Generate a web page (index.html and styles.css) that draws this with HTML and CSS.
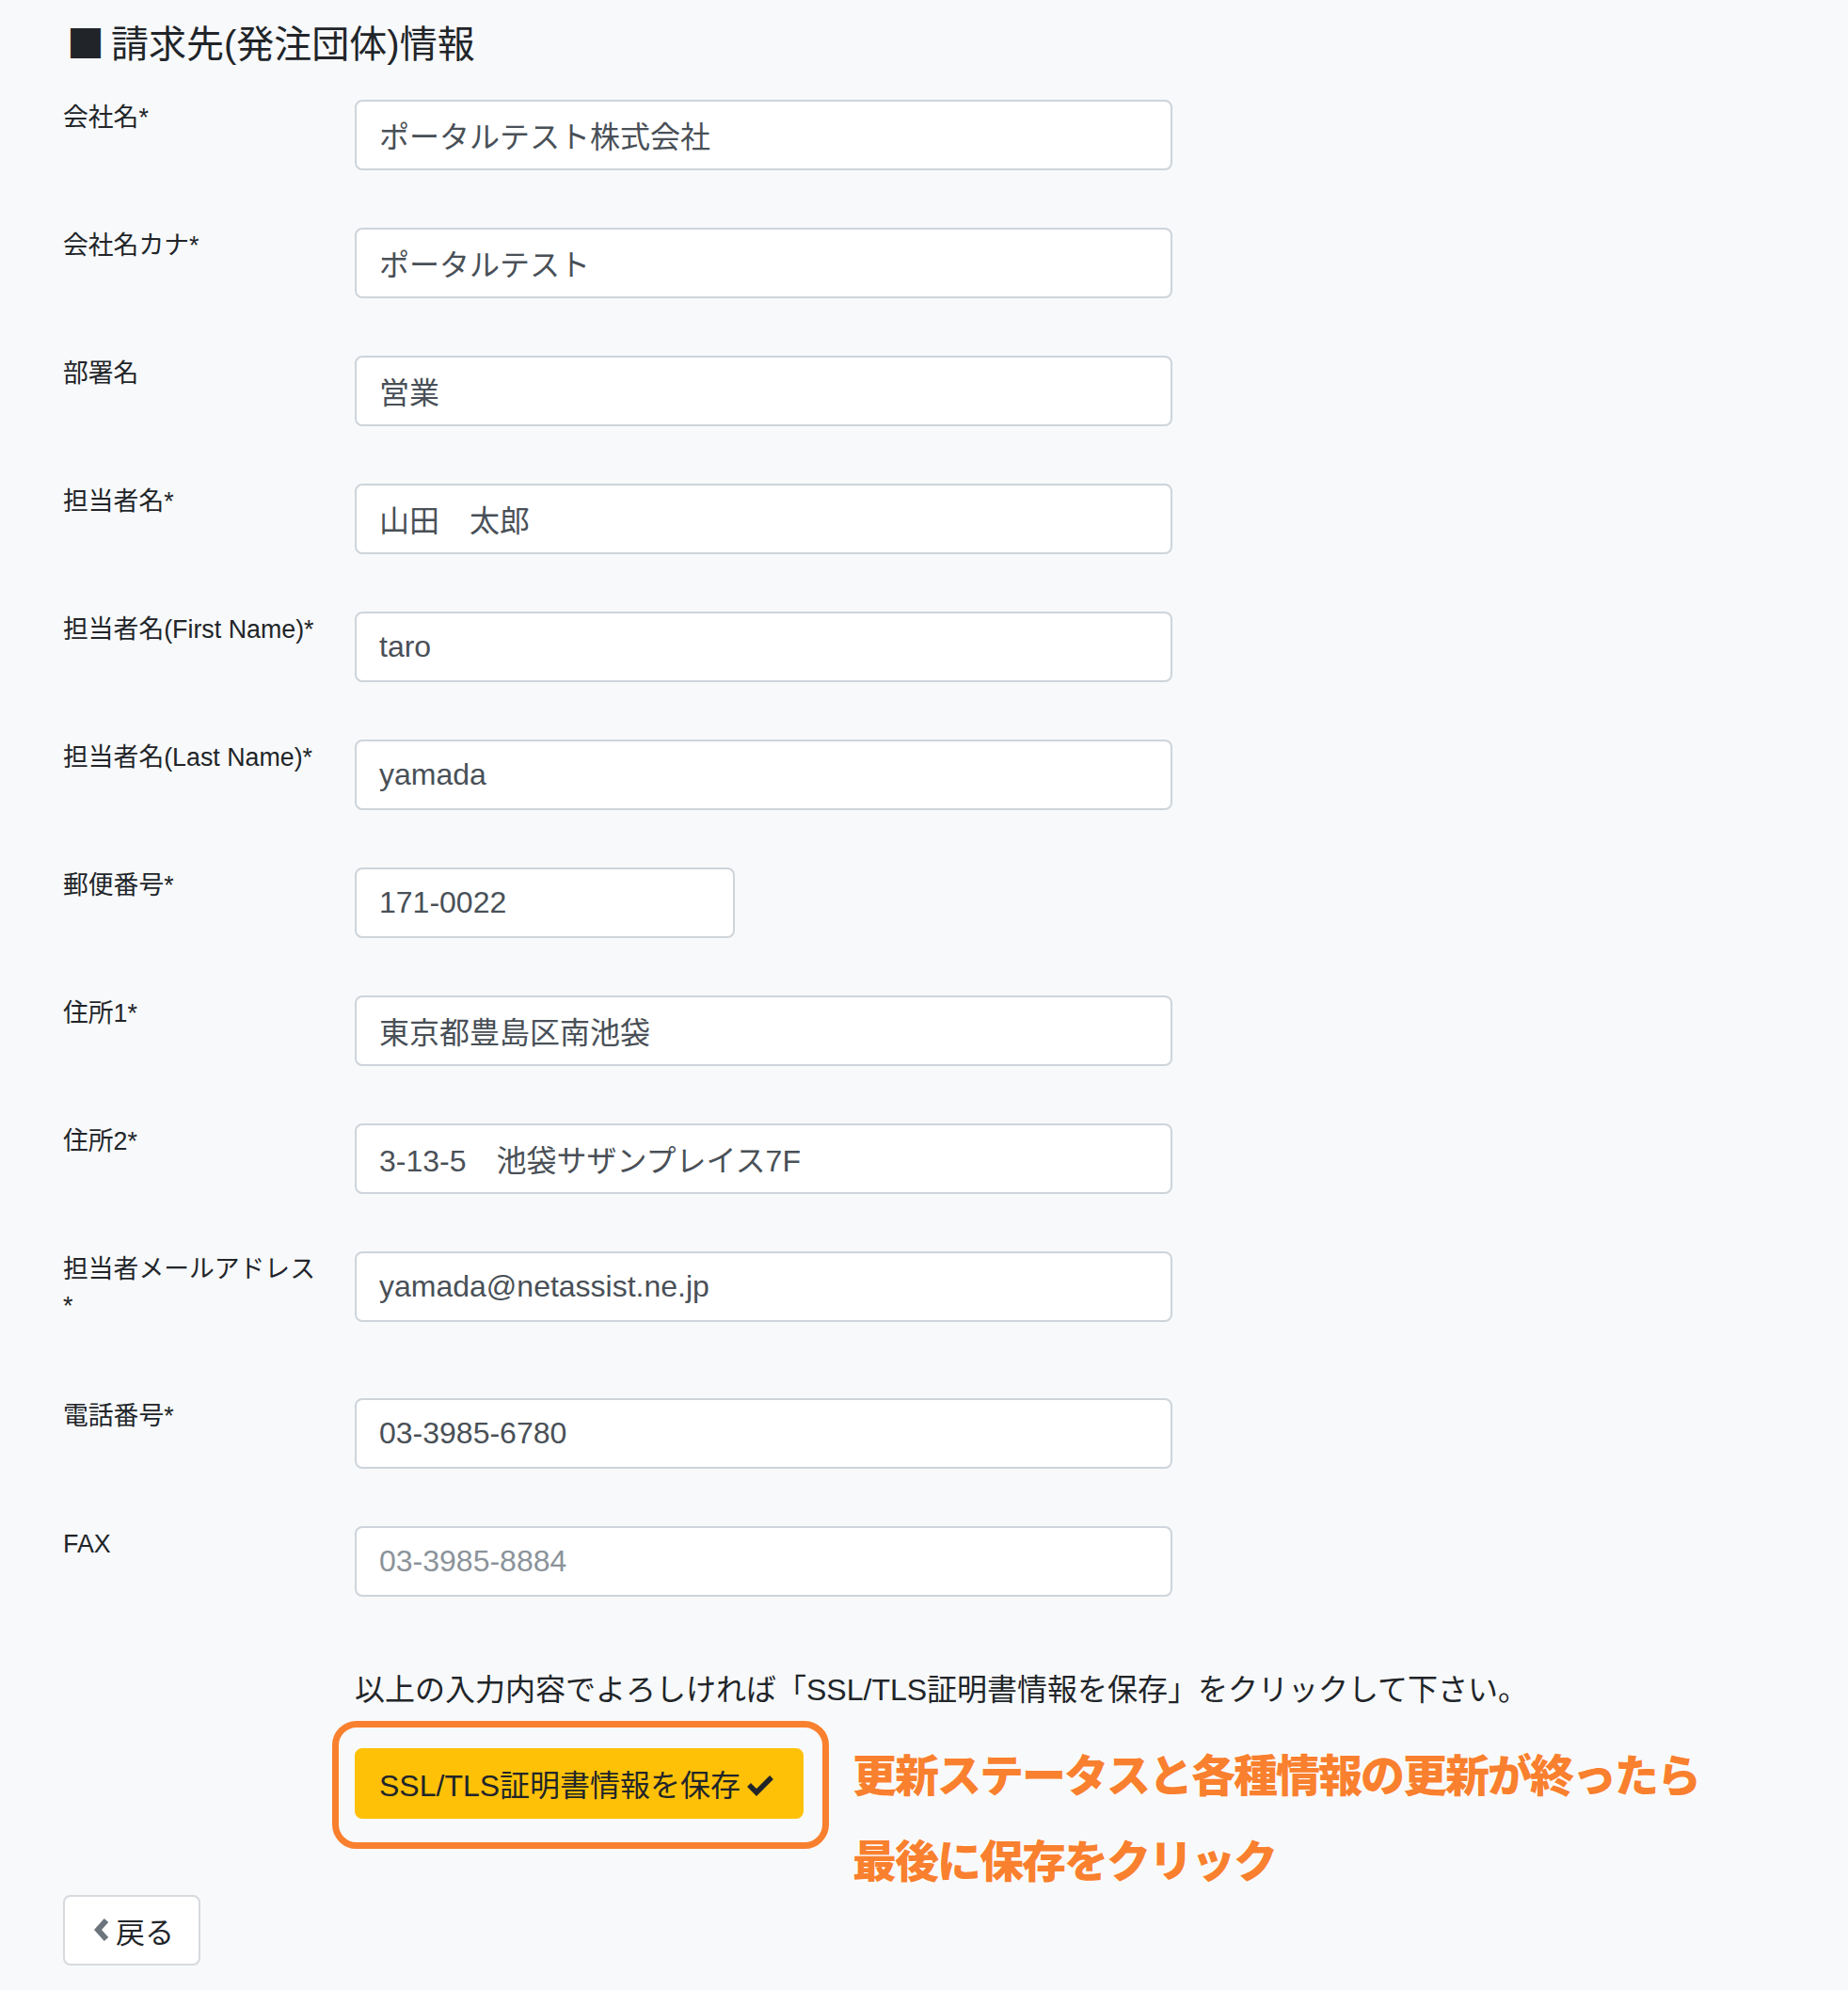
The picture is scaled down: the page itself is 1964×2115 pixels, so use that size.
FILE: index.html
```html
<!DOCTYPE html>
<html lang="ja">
<head>
    <meta charset="UTF-8">
    <meta name="viewport" content="width=device-width, initial-scale=1.0">
    <title>請求先情報</title>
    <link rel="stylesheet" href="styles.css">
</head>
<body>
    <div class="page">
        <h2 class="section-title"><span class="title-mark">■</span>請求先(発注団体)情報</h2>

        <form class="billing-form">
            <div class="form-row">
                <label class="form-label" for="company">会社名*</label>
                <input class="form-input" id="company" type="text" value="ポータルテスト株式会社">
            </div>
            <div class="form-row">
                <label class="form-label" for="companyKana">会社名カナ*</label>
                <input class="form-input" id="companyKana" type="text" value="ポータルテスト">
            </div>
            <div class="form-row">
                <label class="form-label" for="department">部署名</label>
                <input class="form-input" id="department" type="text" value="営業">
            </div>
            <div class="form-row">
                <label class="form-label" for="person">担当者名*</label>
                <input class="form-input" id="person" type="text" value="山田　太郎">
            </div>
            <div class="form-row">
                <label class="form-label" for="firstName">担当者名(First Name)*</label>
                <input class="form-input" id="firstName" type="text" value="taro">
            </div>
            <div class="form-row">
                <label class="form-label" for="lastName">担当者名(Last Name)*</label>
                <input class="form-input" id="lastName" type="text" value="yamada">
            </div>
            <div class="form-row">
                <label class="form-label" for="zip">郵便番号*</label>
                <input class="form-input input-short" id="zip" type="text" value="171-0022">
            </div>
            <div class="form-row">
                <label class="form-label" for="address1">住所1*</label>
                <input class="form-input" id="address1" type="text" value="東京都豊島区南池袋">
            </div>
            <div class="form-row">
                <label class="form-label" for="address2">住所2*</label>
                <input class="form-input" id="address2" type="text" value="3-13-5　池袋サザンプレイス7F">
            </div>
            <div class="form-row">
                <label class="form-label" for="email">担当者メールアドレス*</label>
                <input class="form-input" id="email" type="text" value="yamada@netassist.ne.jp">
            </div>
            <div class="form-row">
                <label class="form-label" for="tel">電話番号*</label>
                <input class="form-input" id="tel" type="text" value="03-3985-6780">
            </div>
            <div class="form-row">
                <label class="form-label" for="fax">FAX</label>
                <input class="form-input" id="fax" type="text" placeholder="03-3985-8884">
            </div>
        </form>

        <p class="confirm-note">以上の入力内容でよろしければ「SSL/TLS証明書情報を保存」をクリックして下さい。</p>

        <div class="save-area">
            <button class="btn-save" type="button">SSL/TLS証明書情報を保存<svg class="icon-check" viewBox="0 0 30 24"><polyline points="3,12 11,20 27,4"/></svg></button>
            <span class="callout-frame"></span>
            <p class="callout-text">更新ステータスと各種情報の更新が終ったら<br>最後に保存をクリック</p>
        </div>

        <div class="back-row">
            <button class="btn-back" type="button"><svg class="icon-chevron" viewBox="0 0 17 26"><polyline points="13,3 4,13 13,23"/></svg>戻る</button>
        </div>
    </div>
</body>
</html>
```

FILE: styles.css
```css
:root {
    --text-color: #212529;
    --input-text: #495057;
    --border-color: #ced4da;
    --bg-color: #f8f9fa;
    --accent: #ffc107;
    --callout: #f9802e;
}

body {
    margin: 0;
    background-color: var(--bg-color);
    color: var(--text-color);
    font-family: "Liberation Sans", "Noto Sans CJK JP", sans-serif;
}
.page {
    padding: 22.5px 0 27px 67px;
}
.section-title {
    margin: 0 0 35px;
    font-size: 40px;
    line-height: 48px;
    font-weight: 400;
}
.title-mark {
    font-family: "Noto Sans CJK JP", sans-serif;
    line-height: 0;
    margin-left: 4px;
    margin-right: 7px;
}
.form-row {
    display: flex;
    align-items: flex-start;
    margin-bottom: 61px;
}
.form-label {
    flex: 0 0 310px;
    box-sizing: border-box;
    padding-right: 40px;
    margin-bottom: 16px;
    font-size: 26.8px;
    line-height: 39.75px;
}
.form-input {
    box-sizing: border-box;
    width: 869px;
    height: 75px;
    padding: 0 24px;
    border: 2px solid var(--border-color);
    border-radius: 8px;
    background: #fff;
    color: var(--input-text);
    font-family: "Liberation Sans", "Noto Sans CJK JP", sans-serif;
    font-size: 32px;
    outline: none;
}
.form-input::placeholder {
    color: #8b939a;
    opacity: 1;
}
.input-short {
    width: 404px;
}
.confirm-note {
    margin: 75px 0 37.5px 310px;
    font-size: 32px;
    line-height: 48px;
}
.save-area {
    position: relative;
    display: flex;
    margin-left: 310px;
}
.btn-save {
    display: inline-flex;
    align-items: center;
    height: 75px;
    padding: 0 29px 0 24px;
    border: 2px solid var(--accent);
    border-radius: 8px;
    background: var(--accent);
    color: var(--text-color);
    font-family: "Liberation Sans", "Noto Sans CJK JP", sans-serif;
    font-size: 32px;
    cursor: pointer;
}
.icon-check {
    width: 30px;
    height: 24px;
    margin-left: 6px;
    margin-top: 4px;
    fill: none;
    stroke: var(--text-color);
    stroke-width: 5.5;
}
.callout-frame {
    position: absolute;
    left: -24px;
    top: -28.5px;
    width: 528px;
    height: 136px;
    box-sizing: border-box;
    border: 7px solid var(--callout);
    border-radius: 26px;
}
.callout-text {
    position: absolute;
    left: 529px;
    top: -16px;
    margin: 0;
    color: var(--callout);
    font-size: 47px;
    font-weight: 900;
    letter-spacing: -2px;
    line-height: 91px;
    white-space: nowrap;
    text-shadow: 0 0 3px #fff, 0 0 3px #fff;
}
.back-row {
    margin-top: 81px;
}
.btn-back {
    display: inline-flex;
    align-items: center;
    gap: 6px;
    height: 75px;
    padding: 0 26px 0 31px;
    border: 2px solid #d6dade;
    border-radius: 8px;
    background: #fff;
    color: var(--text-color);
    font-family: "Liberation Sans", "Noto Sans CJK JP", sans-serif;
    font-size: 31px;
    cursor: pointer;
}
.icon-chevron {
    width: 17px;
    height: 26px;
    fill: none;
    stroke: #6c757d;
    stroke-width: 6;
}
```
